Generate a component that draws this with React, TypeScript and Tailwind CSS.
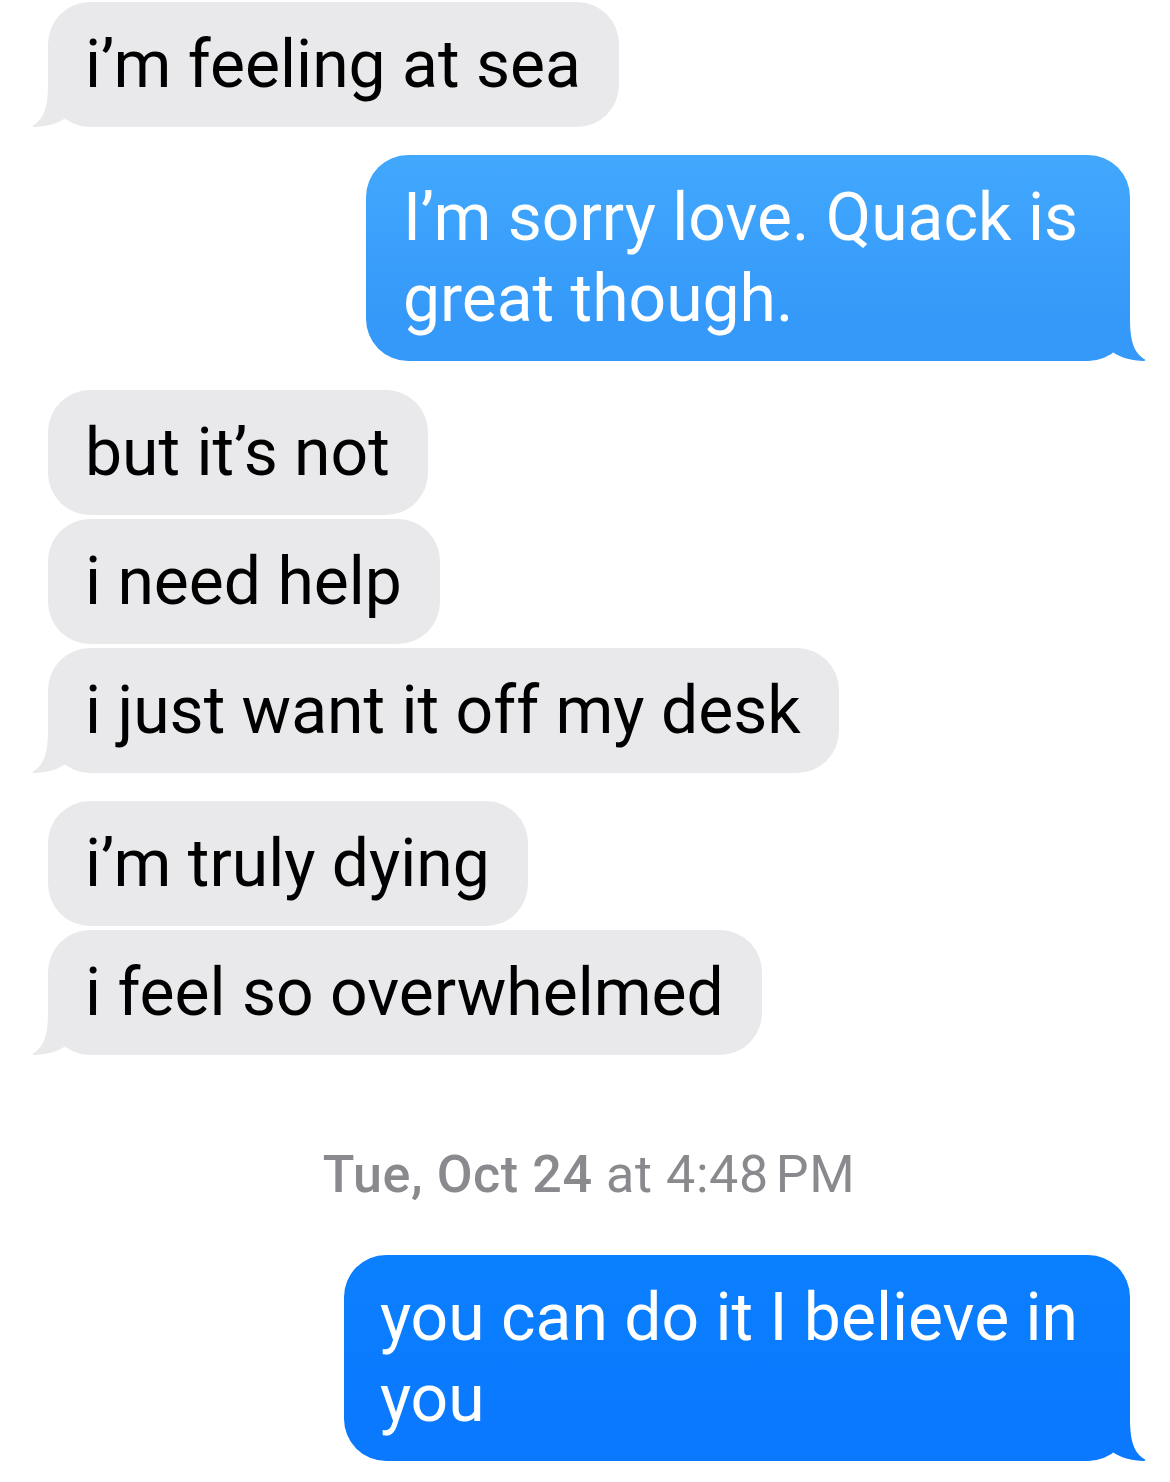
import React from "react";

const FONT = { fontFamily: "Roboto, 'Noto Sans', Arial, sans-serif" };

function Tail({ side, color }: { side: "left" | "right"; color: string }) {
  const pos =
    side === "left"
      ? "absolute bottom-0 left-[-16px]"
      : "absolute bottom-0 right-[-16px] -scale-x-100";
  return (
    <svg className={pos} width="70" height="42" viewBox="0 0 70 42" aria-hidden="true">
      <path
        d="M16 0 C16 22 12 34 1 40.5 Q0 41.6 2 42 C14 42 26 38.5 34 32.5 C42 39 52 42 70 42 L70 0 Z"
        fill={color}
      />
    </svg>
  );
}

function Gray({ text, tail, className = "" }: { text: string; tail?: boolean; className?: string }) {
  return (
    <div className={`relative self-start rounded-[42px] bg-[#e9e9eb] pl-[37px] pr-[38px] py-[22px] ${className}`}>
      {tail && <Tail side="left" color="#e9e9eb" />}
      <span className="relative block whitespace-nowrap text-[66px] leading-[81px] text-black">{text}</span>
    </div>
  );
}

function Blue({
  lines,
  from,
  to,
  className = "",
}: {
  lines: string[];
  from: string;
  to: string;
  className?: string;
}) {
  return (
    <div
      className={`relative self-end rounded-[42px] py-[22px] ${className}`}
      style={{ background: `linear-gradient(to bottom, ${from}, ${to} calc(100% - 44px), ${to})` }}
    >
      <Tail side="right" color={to} />
      <span className="relative block whitespace-nowrap text-[66px] leading-[81px] text-white">
        {lines.map((l, i) => (
          <React.Fragment key={i}>
            {l}
            {i < lines.length - 1 && <br />}
          </React.Fragment>
        ))}
      </span>
    </div>
  );
}

export default function App() {
  return (
    <div
      className="flex h-[1482px] w-[1170px] flex-col overflow-hidden bg-white pl-[48px] pr-[40px] pt-[2px]"
      style={FONT}
    >
      <Gray text="i’m feeling at sea" tail />
      <Blue
        className="mt-[28px] pl-[37px] pr-[52px]"
        lines={["I’m sorry love. Quack is", "great though."]}
        from="#42a8fd"
        to="#3599f9"
      />
      <Gray className="mt-[29px]" text="but it’s not" />
      <Gray className="mt-[4px]" text="i need help" />
      <Gray className="mt-[4px]" text="i just want it off my desk" tail />
      <Gray className="mt-[28px]" text="i’m truly dying" />
      <Gray className="mt-[4px]" text="i feel so overwhelmed" tail />
      <div className="mt-[90px] mb-[50px] -ml-[48px] -mr-[40px] pl-[8px] text-center text-[52px] leading-[60px] tracking-[0.6px] text-[#8a8a8e]">
        <span className="font-medium">Tue, Oct 24</span> at 4:48&#8239;PM
      </div>
      <Blue
        className="pl-[36px] pr-[52px]"
        lines={["you can do it I believe in", "you"]}
        from="#0b80ff"
        to="#0a79fe"
      />
    </div>
  );
}
